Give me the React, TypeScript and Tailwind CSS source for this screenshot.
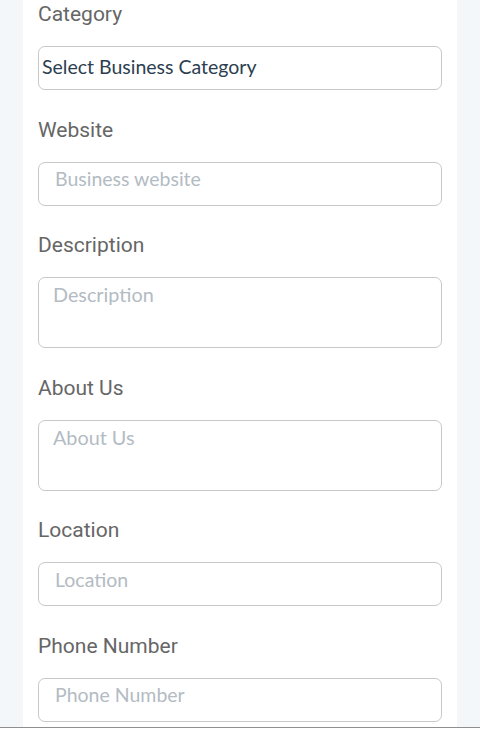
import { useState } from "react";

const labelCls = "block text-[21px] leading-6 text-[#666666] pt-px mb-[20px]";
const inputCls =
  "block w-full box-border h-[44px] rounded-[7px] border border-[#c6c8ca] bg-white px-4 pt-[4px] pb-[14px] text-[19.5px] leading-6 text-[#2c3e50] placeholder:text-[#b3bbc3] outline-none";
const areaCls =
  "block w-full box-border h-[71px] resize-none rounded-[7px] border border-[#c6c8ca] bg-white px-[14px] pt-[4px] text-[19.8px] leading-6 text-[#2c3e50] placeholder:text-[#b3bbc3] outline-none";

export default function App() {
  const [category, setCategory] = useState("");
  const [website, setWebsite] = useState("");
  const [description, setDescription] = useState("");
  const [about, setAbout] = useState("");
  const [location, setLocation] = useState("");
  const [phone, setPhone] = useState("");

  return (
    <div className="min-h-screen bg-[#f3f7fa] px-[23px]">
      <div className="bg-white px-[15px] pt-px pb-10" style={{ fontFamily: "Lato, sans-serif" }}>
        <div className="mb-[26.5px]">
          <label className={labelCls} style={{ fontFamily: "Roboto, sans-serif" }}>Category</label>
          <select
            value={category}
            onChange={(e) => setCategory(e.target.value)}
            className="block w-full box-border h-[44px] appearance-none rounded-[7px] border border-[#c6c8ca] bg-white pl-[3px] pb-[2px] text-[19.5px] text-[#2c3e50] outline-none"
          >
            <option value="">Select Business Category</option>
            <option value="retail">Retail</option>
            <option value="food">Food &amp; Drink</option>
            <option value="services">Services</option>
          </select>
        </div>

        <div className="mb-[26.5px]">
          <label className={labelCls} style={{ fontFamily: "Roboto, sans-serif" }}>Website</label>
          <input className={inputCls} value={website} placeholder="Business website" onChange={(e) => setWebsite(e.target.value)} />
        </div>

        <div className="mb-[26.5px]">
          <label className={labelCls} style={{ fontFamily: "Roboto, sans-serif" }}>Description</label>
          <textarea className={areaCls} value={description} placeholder="Description" onChange={(e) => setDescription(e.target.value)} />
        </div>

        <div className="mb-[26.5px]">
          <label className={labelCls} style={{ fontFamily: "Roboto, sans-serif" }}>About Us</label>
          <textarea className={areaCls} value={about} placeholder="About Us" onChange={(e) => setAbout(e.target.value)} />
        </div>

        <div className="mb-[26.5px]">
          <label className={labelCls} style={{ fontFamily: "Roboto, sans-serif" }}>Location</label>
          <input className={inputCls} value={location} placeholder="Location" onChange={(e) => setLocation(e.target.value)} />
        </div>

        <div className="mb-[26.5px]">
          <label className={labelCls} style={{ fontFamily: "Roboto, sans-serif" }}>Phone Number</label>
          <input className={inputCls} value={phone} placeholder="Phone Number" onChange={(e) => setPhone(e.target.value)} />
        </div>
      </div>

      {/* bottom bar edge */}
      <div className="fixed bottom-0 left-0 right-0 h-[2px] border-t border-[#8f8f8f] bg-white" />
    </div>
  );
}
